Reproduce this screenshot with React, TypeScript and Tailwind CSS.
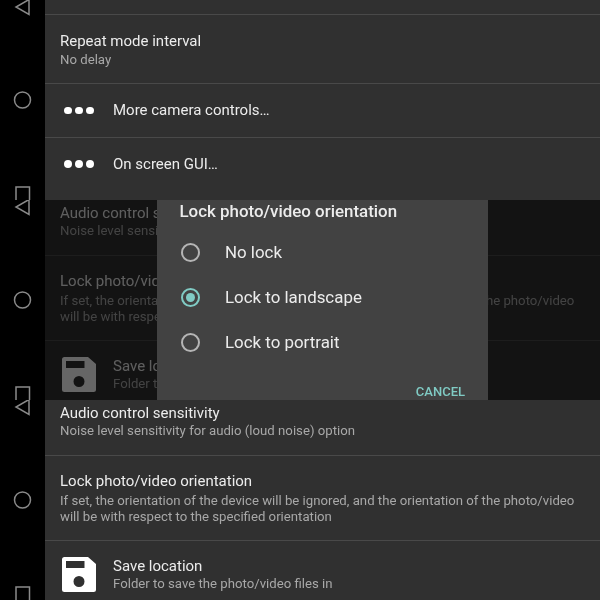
import React from "react";

function NavStrip() {
  return (
    <svg width="45" height="200" viewBox="0 0 45 200" fill="none" stroke="#8a8a8a" strokeWidth="1.5" className="block shrink-0">
      <path d="M29 -0.5V14.5L16 7Z" />
      <circle cx="22.5" cy="100" r="8" />
      <rect x="16" y="187" width="13.5" height="26" />
    </svg>
  );
}

function Dots() {
  return (
    <div className="w-[68px] pl-[19px] flex gap-[3.5px] shrink-0">
      <span className="w-[7.5px] h-[7.5px] rounded-full bg-white" />
      <span className="w-[7.5px] h-[7.5px] rounded-full bg-white" />
      <span className="w-[7.5px] h-[7.5px] rounded-full bg-white" />
    </div>
  );
}

function Floppy() {
  return (
    <svg width="34" height="35" viewBox="0 0 34 35" className="block shrink-0">
      <path
        fillRule="evenodd"
        fill="#fff"
        d="M2.5 0H26L34 7V32.5A2.5 2.5 0 0 1 31.5 35H2.5A2.5 2.5 0 0 1 0 32.5V2.5A2.5 2.5 0 0 1 2.5 0ZM4 4V11H22.5V4ZM17 19A5.5 5.5 0 1 0 17 30A5.5 5.5 0 1 0 17 19Z"
      />
    </svg>
  );
}

function Band({ children }: { children: React.ReactNode }) {
  return (
    <div className="relative flex h-[200px] overflow-hidden bg-black">
      <NavStrip />
      <div className="flex-1 min-w-0 bg-[#303030]">{children}</div>
    </div>
  );
}

function TopRows() {
  return (
    <>
      <div className="h-[15px] border-b border-[#494949]" />
      <div className="h-[69px] border-b border-[#494949] pl-[15px] pt-[16px]">
        <div className="text-[15px] leading-[20px] text-[#ececec]">Repeat mode interval</div>
        <div className="text-[13.2px] leading-[18px] text-[#a8a8a8]">No delay</div>
      </div>
      <div className="h-[54px] border-b border-[#494949] flex items-center">
        <Dots />
        <div className="text-[15px] text-[#ececec]">More camera controls…</div>
      </div>
      <div className="h-[52px] flex items-center">
        <Dots />
        <div className="text-[15px] text-[#ececec]">On screen GUI…</div>
      </div>
    </>
  );
}

function SettingsRows() {
  return (
    <>
      <div className="h-[56px] border-b border-[#494949] pl-[15px] pt-[3px]">
        <div className="text-[15px] leading-[20px] text-[#ececec] whitespace-nowrap">Audio control sensitivity</div>
        <div className="text-[13.2px] leading-[18px] mt-[-1px] text-[#a8a8a8] whitespace-nowrap">Noise level sensitivity for audio (loud noise) option</div>
      </div>
      <div className="h-[85px] border-b border-[#494949] pl-[15px] pt-[15px]">
        <div className="text-[15px] leading-[20px] text-[#ececec] whitespace-nowrap">Lock photo/video orientation</div>
        <div className="text-[13.2px] leading-[16px] mt-[2px] text-[#a8a8a8] whitespace-nowrap">
          If set, the orientation of the device will be ignored, and the orientation of the photo/video
          <br />
          will be with respect to the specified orientation
        </div>
      </div>
      <div className="flex pl-[17px] pt-[16px]">
        <div className="w-[51px] shrink-0">
          <Floppy />
        </div>
        <div className="-mt-[1px]">
          <div className="text-[15px] leading-[20px] text-[#ececec] whitespace-nowrap">Save location</div>
          <div className="text-[13.2px] leading-[18px] mt-[-1px] text-[#a8a8a8] whitespace-nowrap">Folder to save the photo/video files in</div>
        </div>
      </div>
    </>
  );
}

function Radio({ label, checked }: { label: string; checked?: boolean }) {
  return (
    <div className="h-[45px] flex items-center pl-[24px]">
      <span className={"w-[19px] h-[19px] rounded-full border-2 flex items-center justify-center shrink-0 " + (checked ? "border-[#80cbc4]" : "border-[#b5b5b5]")}>
        {checked && <span className="w-[9px] h-[9px] rounded-full bg-[#80cbc4]" />}
      </span>
      <span className="ml-[25px] text-[16.9px] text-[#ececec]">{label}</span>
    </div>
  );
}

function Dialog() {
  return (
    <div className="absolute left-[157px] top-0 w-[331px] h-[200px] bg-[#424242] flex flex-col">
      <div className="pl-[22.5px] pt-[1px] text-[16.9px] leading-[20px] font-medium text-[#ececec] whitespace-nowrap">Lock photo/video orientation</div>
      <div className="mt-[9px]">
        <Radio label="No lock" />
        <Radio label="Lock to landscape" checked />
        <Radio label="Lock to portrait" />
      </div>
      <div className="mt-auto pr-[23px] -mb-[1px] text-right text-[13px] leading-[18px] font-medium text-[#80cbc4]">CANCEL</div>
    </div>
  );
}

export default function App() {
  return (
    <div className="w-[600px] h-[600px] overflow-hidden bg-black font-['Roboto',sans-serif] blur-[0.3px]">
      <Band>
        <TopRows />
      </Band>
      <Band>
        <SettingsRows />
        <div className="absolute inset-0 left-[45px] bg-black/60" />
        <Dialog />
      </Band>
      <Band>
        <SettingsRows />
      </Band>
    </div>
  );
}
